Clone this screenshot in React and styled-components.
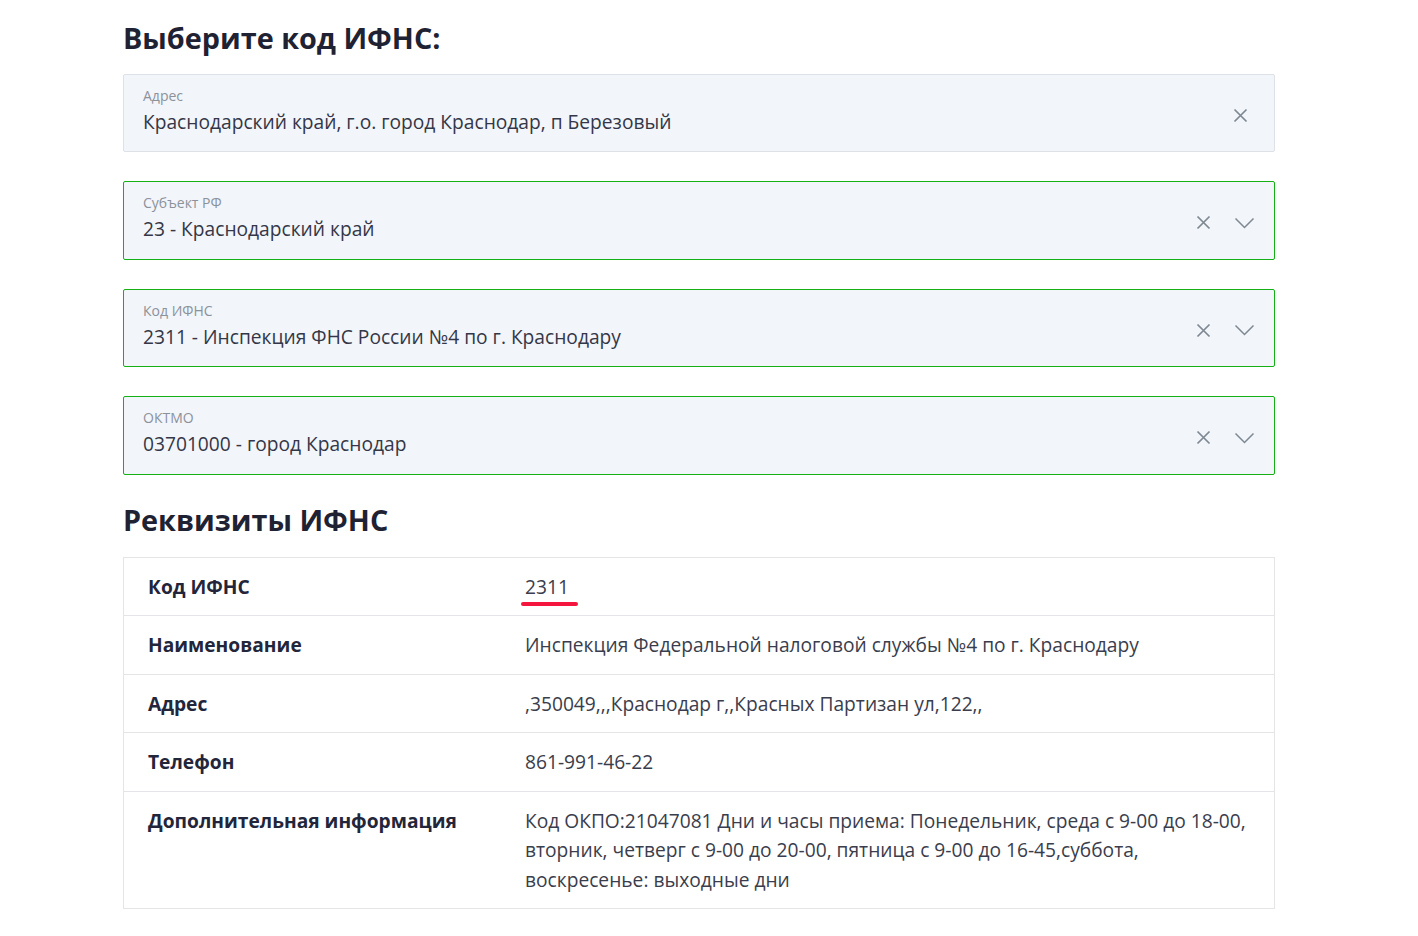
import React from "react";
import styled, { createGlobalStyle } from "styled-components";

const GlobalStyle = createGlobalStyle`
  body {
    margin: 0;
    background: #ffffff;
    font-family: "Open Sans", "Noto Sans", "Liberation Sans", sans-serif;
    color: #2b2e3d;
  }
`;

const Page = styled.div`
  width: 1152px;
  margin-left: 123px;
  padding-top: 18px;
  padding-bottom: 28px;
`;

const Title = styled.h2`
  font-size: 28.8px;
  line-height: 40px;
  font-weight: 700;
  color: #1f2233;
  margin: ${(p) => (p.$second ? "25px 0 17px" : "0 0 16px")};
`;

const FieldList = styled.div`
  display: flex;
  flex-direction: column;
  gap: 29px;
`;

const Field = styled.div`
  display: flex;
  align-items: flex-start;
  height: 78.4px;
  box-sizing: border-box;
  background: #f2f5fa;
  border: 1px solid ${(p) => (p.$valid ? "#14b014" : "#dde2e8")};
  border-radius: 2px;
  padding: 11px ${(p) => (p.$select ? "19px" : "26px")} 0 19px;
`;

const FieldText = styled.div`
  flex: 1;
  display: flex;
  flex-direction: column;
`;

const FieldLabel = styled.span`
  font-size: 14px;
  line-height: 20px;
  color: #8b929b;
`;

const FieldValue = styled.span`
  font-size: 19.2px;
  line-height: 32px;
  color: #343747;
`;

const Icons = styled.div`
  display: flex;
  align-items: center;
  gap: 23px;
  height: 40px;
  margin-top: 9.5px;
`;

const IconBtn = styled.span`
  display: flex;
  align-items: center;
  justify-content: center;
  color: #7e8892;
`;

const CloseIcon = () => (
  <IconBtn>
    <svg width="15" height="15" viewBox="0 0 15 15">
      <path d="M1.5 1.5L13.5 13.5M13.5 1.5L1.5 13.5" stroke="currentColor" strokeWidth="1.7" fill="none" />
    </svg>
  </IconBtn>
);

const ChevronIcon = () => (
  <IconBtn>
    <svg width="21" height="12" viewBox="0 0 21 12">
      <path d="M1.5 1.5L10.5 10.5L19.5 1.5" stroke="currentColor" strokeWidth="1.5" fill="none" />
    </svg>
  </IconBtn>
);

const Table = styled.div`
  border: 1px solid #e3e5e8;
`;

const Row = styled.div`
  display: grid;
  grid-template-columns: 401px 1fr;
  border-top: ${(p) => (p.$first ? "none" : "1px solid #e3e5e8")};
`;

const Cell = styled.div`
  padding: 14px 24px 14px ${(p) => (p.$key ? "24px" : "0")};
  font-size: 19.2px;
  line-height: 29.5px;
  font-weight: ${(p) => (p.$key ? 700 : 400)};
  color: ${(p) => (p.$key ? "#23263a" : "#3a3d4c")};
`;

const Marked = styled.span`
  position: relative;
  &::after {
    content: "";
    position: absolute;
    left: -4px;
    right: -9px;
    bottom: -6px;
    height: 4px;
    border-radius: 2px;
    background: #f5163d;
  }
`;

const fields = [
  { label: "Адрес", value: "Краснодарский край, г.о. город Краснодар, п Березовый", select: false },
  { label: "Субъект РФ", value: "23 - Краснодарский край", select: true },
  { label: "Код ИФНС", value: "2311 - Инспекция ФНС России №4 по г. Краснодару", select: true },
  { label: "ОКТМО", value: "03701000 - город Краснодар", select: true },
];

const rows = [
  { key: "Код ИФНС", value: <Marked>2311</Marked> },
  { key: "Наименование", value: "Инспекция Федеральной налоговой службы №4 по г. Краснодару" },
  { key: "Адрес", value: ",350049,,,Краснодар г,,Красных Партизан ул,122,," },
  { key: "Телефон", value: "861-991-46-22" },
  {
    key: "Дополнительная информация",
    value:
      "Код ОКПО:21047081 Дни и часы приема: Понедельник, среда с 9-00 до 18-00, вторник, четверг с 9-00 до 20-00, пятница с 9-00 до 16-45,суббота, воскресенье: выходные дни",
  },
];

const App = () => (
  <>
    <GlobalStyle />
    <Page>
      <Title>Выберите код ИФНС:</Title>
      <FieldList>
        {fields.map((f) => (
          <Field key={f.label} $valid={f.select} $select={f.select}>
            <FieldText>
              <FieldLabel>{f.label}</FieldLabel>
              <FieldValue>{f.value}</FieldValue>
            </FieldText>
            <Icons>
              <CloseIcon />
              {f.select && <ChevronIcon />}
            </Icons>
          </Field>
        ))}
      </FieldList>
      <Title $second>Реквизиты ИФНС</Title>
      <Table>
        {rows.map((r, i) => (
          <Row key={r.key} $first={i === 0}>
            <Cell $key>{r.key}</Cell>
            <Cell>{r.value}</Cell>
          </Row>
        ))}
      </Table>
    </Page>
  </>
);

export default App;
